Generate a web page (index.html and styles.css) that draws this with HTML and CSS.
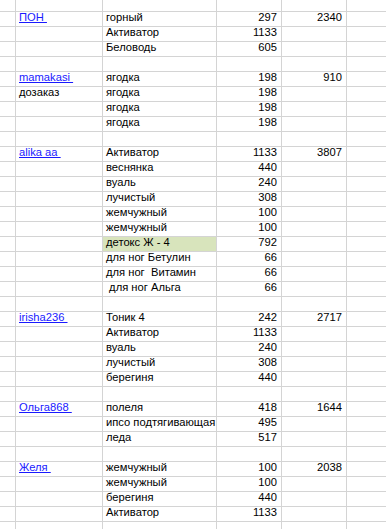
FILE: index.html
```html
<!DOCTYPE html>
<html>
<head>
<meta charset="utf-8">
<link rel="stylesheet" href="styles.css">
</head>
<body>
<div class="sheet">
  <div class="row first"><div class="c a"></div><div class="c b"></div><div class="c t"></div><div class="c n"></div><div class="c n"></div><div class="c f"></div></div>

  <div class="row"><div class="c a"></div><div class="c b"><a class="link">ПОН&nbsp;</a></div><div class="c t">горный</div><div class="c n">297</div><div class="c n">2340</div><div class="c f"></div></div>
  <div class="row"><div class="c a"></div><div class="c b"></div><div class="c t">Активатор</div><div class="c n">1133</div><div class="c n"></div><div class="c f"></div></div>
  <div class="row"><div class="c a"></div><div class="c b"></div><div class="c t">Беловодь</div><div class="c n">605</div><div class="c n"></div><div class="c f"></div></div>
  <div class="row"><div class="c a"></div><div class="c b"></div><div class="c t"></div><div class="c n"></div><div class="c n"></div><div class="c f"></div></div>

  <div class="row"><div class="c a"></div><div class="c b"><a class="link">mamakasi&nbsp;</a></div><div class="c t">ягодка</div><div class="c n">198</div><div class="c n">910</div><div class="c f"></div></div>
  <div class="row"><div class="c a"></div><div class="c b">дозаказ</div><div class="c t">ягодка</div><div class="c n">198</div><div class="c n"></div><div class="c f"></div></div>
  <div class="row"><div class="c a"></div><div class="c b"></div><div class="c t">ягодка</div><div class="c n">198</div><div class="c n"></div><div class="c f"></div></div>
  <div class="row"><div class="c a"></div><div class="c b"></div><div class="c t">ягодка</div><div class="c n">198</div><div class="c n"></div><div class="c f"></div></div>
  <div class="row"><div class="c a"></div><div class="c b"></div><div class="c t"></div><div class="c n"></div><div class="c n"></div><div class="c f"></div></div>

  <div class="row"><div class="c a"></div><div class="c b"><a class="link">alika aa&nbsp;</a></div><div class="c t">Активатор</div><div class="c n">1133</div><div class="c n">3807</div><div class="c f"></div></div>
  <div class="row"><div class="c a"></div><div class="c b"></div><div class="c t">веснянка</div><div class="c n">440</div><div class="c n"></div><div class="c f"></div></div>
  <div class="row"><div class="c a"></div><div class="c b"></div><div class="c t">вуаль</div><div class="c n">240</div><div class="c n"></div><div class="c f"></div></div>
  <div class="row"><div class="c a"></div><div class="c b"></div><div class="c t">лучистый</div><div class="c n">308</div><div class="c n"></div><div class="c f"></div></div>
  <div class="row"><div class="c a"></div><div class="c b"></div><div class="c t">жемчужный</div><div class="c n">100</div><div class="c n"></div><div class="c f"></div></div>
  <div class="row"><div class="c a"></div><div class="c b"></div><div class="c t">жемчужный</div><div class="c n">100</div><div class="c n"></div><div class="c f"></div></div>
  <div class="row"><div class="c a"></div><div class="c b"></div><div class="c t green">детокс Ж - 4</div><div class="c n">792</div><div class="c n"></div><div class="c f"></div></div>
  <div class="row"><div class="c a"></div><div class="c b"></div><div class="c t">для ног Бетулин</div><div class="c n">66</div><div class="c n"></div><div class="c f"></div></div>
  <div class="row"><div class="c a"></div><div class="c b"></div><div class="c t">для ног  Витамин</div><div class="c n">66</div><div class="c n"></div><div class="c f"></div></div>
  <div class="row"><div class="c a"></div><div class="c b"></div><div class="c t"> для ног Альга</div><div class="c n">66</div><div class="c n"></div><div class="c f"></div></div>
  <div class="row"><div class="c a"></div><div class="c b"></div><div class="c t"></div><div class="c n"></div><div class="c n"></div><div class="c f"></div></div>

  <div class="row"><div class="c a"></div><div class="c b"><a class="link">irisha236&nbsp;</a></div><div class="c t">Тоник 4</div><div class="c n">242</div><div class="c n">2717</div><div class="c f"></div></div>
  <div class="row"><div class="c a"></div><div class="c b"></div><div class="c t">Активатор</div><div class="c n">1133</div><div class="c n"></div><div class="c f"></div></div>
  <div class="row"><div class="c a"></div><div class="c b"></div><div class="c t">вуаль</div><div class="c n">240</div><div class="c n"></div><div class="c f"></div></div>
  <div class="row"><div class="c a"></div><div class="c b"></div><div class="c t">лучистый</div><div class="c n">308</div><div class="c n"></div><div class="c f"></div></div>
  <div class="row"><div class="c a"></div><div class="c b"></div><div class="c t">берегиня</div><div class="c n">440</div><div class="c n"></div><div class="c f"></div></div>
  <div class="row"><div class="c a"></div><div class="c b"></div><div class="c t"></div><div class="c n"></div><div class="c n"></div><div class="c f"></div></div>

  <div class="row"><div class="c a"></div><div class="c b"><a class="link">Ольга868&nbsp;</a></div><div class="c t">полеля</div><div class="c n">418</div><div class="c n">1644</div><div class="c f"></div></div>
  <div class="row"><div class="c a"></div><div class="c b"></div><div class="c t">ипсо подтягивающая</div><div class="c n">495</div><div class="c n"></div><div class="c f"></div></div>
  <div class="row"><div class="c a"></div><div class="c b"></div><div class="c t">леда</div><div class="c n">517</div><div class="c n"></div><div class="c f"></div></div>
  <div class="row"><div class="c a"></div><div class="c b"></div><div class="c t"></div><div class="c n"></div><div class="c n"></div><div class="c f"></div></div>

  <div class="row"><div class="c a"></div><div class="c b"><a class="link">Желя&nbsp;</a></div><div class="c t">жемчужный</div><div class="c n">100</div><div class="c n">2038</div><div class="c f"></div></div>
  <div class="row"><div class="c a"></div><div class="c b"></div><div class="c t">жемчужный</div><div class="c n">100</div><div class="c n"></div><div class="c f"></div></div>
  <div class="row"><div class="c a"></div><div class="c b"></div><div class="c t">берегиня</div><div class="c n">440</div><div class="c n"></div><div class="c f"></div></div>
  <div class="row"><div class="c a"></div><div class="c b"></div><div class="c t">Активатор</div><div class="c n">1133</div><div class="c n"></div><div class="c f"></div></div>
  <div class="row"><div class="c a"></div><div class="c b"></div><div class="c t"></div><div class="c n"></div><div class="c n"></div><div class="c f"></div></div>
</div>
</body>
</html>
```

FILE: styles.css
```css
html, body {
  margin: 0;
  padding: 0;
  background: #ffffff;
}
body {
  width: 386px;
  height: 529px;
  overflow: hidden;
  font-family: "Liberation Sans", Arial, sans-serif;
  font-size: 11.2px;
  color: #000000;
}
.sheet {
  display: flex;
  flex-direction: column;
}
.row {
  display: flex;
  height: 15px;
}
.row.first {
  height: 12px;
}
.c {
  box-sizing: border-box;
  height: 100%;
  border-right: 1px solid #d4d4d4;
  border-bottom: 1px solid #d4d4d4;
  white-space: pre;
  overflow: visible;
  display: flex;
  align-items: flex-end;
  padding: 0 3px 2px 3px;
  line-height: 13px;
}
.a { width: 16px; flex: none; }
.b { width: 87px; flex: none; }
.t { width: 114px; flex: none; }
.n { width: 65px; flex: none; justify-content: flex-end; padding-right: 4px; }
.f { flex: 1; border-right: none; }
.green { background: #d8e4bc; }
.link {
  color: #1a1aff;
  text-decoration: underline;
}
```
